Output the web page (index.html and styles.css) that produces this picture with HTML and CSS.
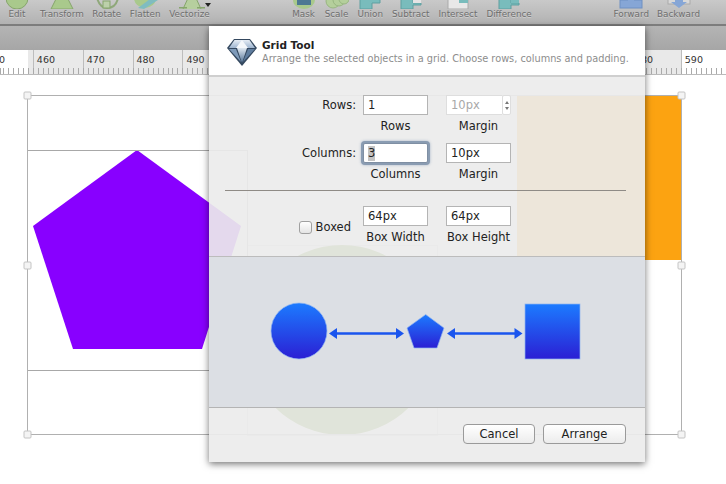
FILE: index.html
```html
<!DOCTYPE html>
<html lang="en">

<head>
    <meta charset="UTF-8">
    <title>Grid Tool</title>
    <link rel="stylesheet" href="styles.css">
</head>

<body>
    <div class="app">
        <!-- toolbar, the icons are cut off by the top of the window -->
        <div class="toolbar">
            <div class="group group-left">
                <div class="tool tool-edit"><svg width="30" height="9"><ellipse cx="15" cy="-2" rx="11" ry="11" fill="#a9c98c" stroke="#86a56c" /></svg><span>Edit</span></div>
                <div class="tool tool-transform"><svg width="30" height="9"><polygon points="10,-3 20,-3 26,9 4,9" fill="#a9c98c" stroke="#86a56c" /></svg><span>Transform</span></div>
                <div class="tool tool-rotate"><svg width="30" height="9"><path d="M5 -2 Q8 8 15 8 Q24 8 26 -2" fill="none" stroke="#8fa87a" stroke-width="2" /><rect x="11" y="1" width="7" height="7" fill="#bcd0aa" stroke="#86a56c" /></svg><span>Rotate</span></div>
                <div class="tool tool-flatten"><svg width="30" height="9"><ellipse cx="15" cy="-2" rx="11" ry="10" fill="#a9c98c" /><path d="M8 8 L24 -4 L28 0 L14 9 Z" fill="#7fbcc0" /></svg><span>Flatten</span></div>
                <div class="tool tool-vector"><svg width="42" height="9"><path d="M14 9 L20 -4 L26 -4 L32 9" fill="#b6cf9e" stroke="#86a56c" /><rect x="10" y="7" width="8" height="1.5" fill="#86a56c" /><rect x="28" y="7" width="8" height="1.5" fill="#86a56c" /><polygon points="36,3 42,3 39,7" fill="#222" /></svg><span>Vectorize</span></div>
            </div>
            <div class="group group-mid">
                <div class="tool"><svg width="24" height="9"><ellipse cx="12" cy="0" rx="11" ry="9" fill="#a9c98c" /><rect x="5" y="-4" width="14" height="9" fill="#4d7893" /></svg><span>Mask</span></div>
                <div class="tool"><svg width="24" height="9"><circle cx="8" cy="1" r="7" fill="#b4cf9b" stroke="#98b681" /><circle cx="14" cy="0" r="6" fill="#b4cf9b" stroke="#98b681" /><circle cx="19" cy="-1" r="5" fill="#b4cf9b" stroke="#98b681" /></svg><span>Scale</span></div>
                <div class="tool"><svg width="24" height="9"><path d="M2 -2 H22 V3 H14 V9 H2 Z" fill="#79bcbc" stroke="#5f9fa0" /></svg><span>Union</span></div>
                <div class="tool"><svg width="24" height="9"><path d="M2 -2 H14 V3 H22 V5 H14 V9 H2 Z" fill="#79bcbc" stroke="#5f9fa0" /><rect x="14" y="-2" width="8" height="5" fill="#e4e4e4" /></svg><span>Subtract</span></div>
                <div class="tool"><svg width="24" height="9"><rect x="2" y="-2" width="20" height="11" fill="#e8e8e8" stroke="#aaa" /><rect x="13" y="-2" width="9" height="5" fill="#79bcbc" /></svg><span>Intersect</span></div>
                <div class="tool"><svg width="24" height="9"><path d="M2 -2 H14 V3 H22 V5 H14 V9 H2 Z" fill="#79bcbc" stroke="#5f9fa0" /><rect x="14" y="-2" width="8" height="5" fill="#79bcbc" /></svg><span>Difference</span></div>
            </div>
            <div class="group group-right">
                <div class="tool"><svg width="24" height="9"><rect x="1" y="0" width="22" height="8" fill="#86a6d6" stroke="#6f90c2" /><rect x="9" y="-2" width="6" height="3" fill="#86a6d6" /></svg><span>Forward</span></div>
                <div class="tool"><svg width="24" height="9"><rect x="1" y="-3" width="22" height="7" fill="#d8d8d8" stroke="#aaa" /><polygon points="8,-2 16,-2 16,2 20,2 12,8 4,2 8,2" fill="#86a6d6" /></svg><span>Backward</span></div>
            </div>
        </div>

        <div class="strip"></div>

        <div class="ruler">
            <span>450</span><span>460</span><span>470</span><span>480</span><span>490</span>
            <!-- 500 to 570 are under the dialog -->
            <span></span><span></span><span></span><span></span><span></span><span></span><span></span><span></span>
            <span>580</span><span>590</span>
        </div>

        <!-- free canvas, numbers are page coordinates -->
        <svg class="canvas" viewBox="0 75 726 409">
            <rect x="247.500" y="245.500" width="190" height="190" fill="none" stroke="#d8d8d8" />
            <circle cx="342" cy="340" r="95" fill="#5f8a10" />
            <rect x="517" y="95" width="164" height="165" fill="#fca311" />
            <polygon points="137,150 241,226 202,349 73,349 33,226" fill="#8800ff" />
            <rect x="27.500" y="150.500" width="220" height="220" fill="none" stroke="#a8a8a8" />
            <rect x="27.500" y="95.500" width="654" height="339" fill="none" stroke="#b0b0b0" />
            <rect class="handle" x="24" y="92" width="7" height="7" rx="1" />
            <rect class="handle" x="24" y="262" width="7" height="7" rx="1" />
            <rect class="handle" x="24" y="431" width="7" height="7" rx="1" />
            <rect class="handle" x="678" y="92" width="7" height="7" rx="1" />
            <rect class="handle" x="678" y="262" width="7" height="7" rx="1" />
            <rect class="handle" x="678" y="431" width="7" height="7" rx="1" />
        </svg>

        <div class="dialog">
            <div class="dlg-head">
                <svg class="gem" width="30" height="28" viewBox="0 0 30 28">
                    <defs>
                        <linearGradient id="gemTop" x1="0" y1="0" x2="0" y2="1">
                            <stop offset="0" stop-color="#e6edf5" />
                            <stop offset="1" stop-color="#9db4cf" />
                        </linearGradient>
                        <linearGradient id="gemLow" x1="0" y1="0" x2="0" y2="1">
                            <stop offset="0" stop-color="#dfe8f1" />
                            <stop offset="1" stop-color="#4f6f93" />
                        </linearGradient>
                    </defs>
                    <polygon points="7,1 23,1 30,10 15,28 0,10" fill="#34485f" />
                    <polygon points="7.500,2 22.500,2 28,10 2,10" fill="url(#gemTop)" />
                    <polygon points="10,10 20,10 15,25" fill="url(#gemLow)" />
                    <polygon points="2,11 9,11 14,24" fill="#7f9bba" />
                    <polygon points="28,11 21,11 16,24" fill="#5f7d9e" />
                    <polygon points="15,2 21,10 9,10" fill="#f5f8fb" />
                </svg>
                <div>
                    <div class="dlg-title">Grid Tool</div>
                    <div class="dlg-sub">Arrange the selected objects in a grid. Choose rows, columns and padding.</div>
                </div>
            </div>

            <div class="dlg-form">
                <div class="row">
                    <label class="row-label">Rows:</label>
                    <div class="field">
                        <div class="input">1</div>
                        <div class="caption">Rows</div>
                    </div>
                    <div class="field">
                        <div class="stepper-wrap">
                            <div class="input input-off">10px</div>
                            <div class="stepper"><i class="up"></i><i class="down"></i></div>
                        </div>
                        <div class="caption">Margin</div>
                    </div>
                </div>
                <div class="row">
                    <label class="row-label">Columns:</label>
                    <div class="field">
                        <div class="input input-focus"><span class="sel">3</span></div>
                        <div class="caption">Columns</div>
                    </div>
                    <div class="field">
                        <div class="input">10px</div>
                        <div class="caption">Margin</div>
                    </div>
                </div>
                <div class="sep"></div>
                <div class="row">
                    <label class="row-label row-check"><span class="check"></span>Boxed</label>
                    <div class="field">
                        <div class="input">64px</div>
                        <div class="caption">Box Width</div>
                    </div>
                    <div class="field">
                        <div class="input">64px</div>
                        <div class="caption">Box Height</div>
                    </div>
                </div>
            </div>

            <div class="dlg-preview">
                <svg width="330" height="80" viewBox="260 290 330 80">
                    <defs>
                        <linearGradient id="blue" x1="0" y1="0" x2="0" y2="1">
                            <stop offset="0" stop-color="#1c7bff" />
                            <stop offset="1" stop-color="#2b1fd4" />
                        </linearGradient>
                    </defs>
                    <circle cx="299" cy="331" r="28" fill="url(#blue)" stroke="#8fb4f0" stroke-width="0.700" />
                    <polygon points="425.700,314.500 444,328 437,348 414,348 407,328" fill="url(#blue)" stroke="#8fb4f0" stroke-width="0.700" />
                    <rect x="525" y="304" width="55" height="55" fill="url(#blue)" stroke="#8fb4f0" stroke-width="0.700" />
                    <path d="M334 333.500 H400" stroke="#1a55ee" stroke-width="2.500" />
                    <polygon points="329,333.500 337,328 337,339" fill="#1a55ee" />
                    <polygon points="404,333.500 396,328 396,339" fill="#1a55ee" />
                    <path d="M452 333.500 H518" stroke="#1a55ee" stroke-width="2.500" />
                    <polygon points="447,333.500 455,328 455,339" fill="#1a55ee" />
                    <polygon points="522.500,333.500 514.500,328 514.500,339" fill="#1a55ee" />
                </svg>
            </div>

            <div class="dlg-foot">
                <button class="btn btn-cancel">Cancel</button>
                <button class="btn btn-ok">Arrange</button>
            </div>
        </div>
    </div>
</body>

</html>
```

FILE: styles.css
```css
* {
    padding: 0;
    margin: 0;
    box-sizing: border-box;
}

body {
    overflow: hidden;
    background: #fff;
    font-family: "DejaVu Sans", sans-serif;
    color: #222;
}

.app {
    width: 726px;
    height: 484px;
    position: relative;
    display: flex;
    flex-direction: column;
    overflow: hidden;
}

/* toolbar */
.toolbar {
    height: 26px;
    display: flex;
    background: linear-gradient(#c9c9c9, #b2b2b2);
    border-bottom: 2px solid #7d7d7d;
}

.group {
    display: flex;
    align-items: flex-start;
}

.group-left {
    gap: 8px;
    padding-left: 2px;
}

.group-mid {
    gap: 9px;
    margin-left: 81px;
}

.group-right {
    gap: 8px;
    margin-left: auto;
    margin-right: 26px;
}

.tool {
    display: flex;
    flex-direction: column;
    align-items: center;
    font-size: 8.800px;
    line-height: 11px;
    color: #6e6e6e;
    text-shadow: 0 1px 0 rgba(255, 255, 255, 0.35);
}

.tool svg {
    display: block;
    overflow: hidden;
}

.strip {
    height: 24px;
    background: linear-gradient(#b4b4b4, #a6a6a6);
}

/* ruler */
.ruler {
    height: 25px;
    display: flex;
    padding-left: 28px;
    background-color: #fff;
    border-bottom: 1px solid #bbb;
    overflow: hidden;
    position: relative;
}

.ruler::before {
    content: "";
    position: absolute;
    left: 28px;
    top: 0;
    width: 653px;
    height: 24px;
    background: #e9e9e9;
}

.ruler::after {
    content: "";
    position: absolute;
    left: 0;
    right: 0;
    bottom: 0;
    height: 6px;
    background: repeating-linear-gradient(90deg, #aaa 0, #aaa 1px, transparent 1px, transparent 4.985px);
    background-position: 3px 0;
}

.ruler span {
    flex: none;
    width: 49.850px;
    position: relative;
    padding: 3px 0 0 3px;
    border-left: 1px solid #bdbdbd;
    font-size: 9.500px;
    line-height: 14px;
    color: #333;
}

.ruler span:first-child {
    margin-left: -45px;
}

/* canvas */
.canvas {
    display: block;
    width: 726px;
    height: 409px;
}

.handle {
    fill: #f4f4f4;
    stroke: #c4c4c4;
}

/* dialog */
.dialog {
    position: absolute;
    z-index: 5;
    left: 209px;
    top: 26px;
    width: 436px;
    height: 436px;
    display: flex;
    flex-direction: column;
    box-shadow: 0 2px 7px rgba(0, 0, 0, 0.55);
}

.dlg-head {
    height: 51px;
    flex: none;
    display: flex;
    align-items: flex-start;
    padding: 12px 0 0 18px;
    gap: 5px;
    background: #fff;
    border-bottom: 2px solid #cfcfcf;
}

.gem {
    flex: none;
}

.dlg-title {
    font-size: 10.500px;
    font-weight: bold;
    line-height: 14px;
    color: #222;
}

.dlg-sub {
    font-size: 9.770px;
    line-height: 13px;
    color: #8d8d8d;
    white-space: nowrap;
}

.dlg-form {
    height: 179px;
    flex: none;
    padding-top: 18px;
    display: flex;
    flex-direction: column;
    background: rgba(236, 236, 236, 0.92);
}

.row {
    display: grid;
    grid-template-columns: 147px 65px 65px;
    column-gap: 7px;
    margin-bottom: 5px;
}

.row:first-child {
    margin-bottom: 6px;
}

.row > .field:last-child {
    margin-left: 11px;
}

.row-label {
    font-size: 11.500px;
    line-height: 20px;
    text-align: right;
}

.row-check {
    display: flex;
    justify-content: flex-end;
    align-items: center;
    gap: 4px;
    padding-right: 5px;
}

.check {
    width: 13px;
    height: 13px;
    border: 1px solid #a0a0a0;
    border-radius: 3px;
    background: linear-gradient(#fff, #e4e4e4);
}

.field {
    display: flex;
    flex-direction: column;
    align-items: center;
    width: 65px;
}

.input {
    width: 65px;
    height: 20px;
    padding-left: 4px;
    background: #fff;
    border: 1px solid #b4b4b4;
    font-size: 11.500px;
    line-height: 19px;
    color: #222;
}

.input-off {
    width: 56px;
    border: 1px solid #dedede;
    border-right: 0;
    color: #a8a8a8;
}

.input-focus {
    border-color: #7f8fa3;
    box-shadow: 0 0 0 2px #8a9cb2, 0 0 3px 2px #a7b6c8;
    border-radius: 2px;
}

.sel {
    display: inline-block;
    background: #c4c4c4;
    line-height: 15px;
}

.stepper-wrap {
    display: flex;
}

.stepper {
    width: 9px;
    height: 20px;
    background: #fff;
    border: 1px solid #dedede;
    border-radius: 2px;
    display: flex;
    flex-direction: column;
    align-items: center;
    justify-content: center;
    gap: 3px;
}

.stepper i {
    width: 0;
    height: 0;
    border-left: 2px solid transparent;
    border-right: 2px solid transparent;
}

.stepper .up {
    border-bottom: 3px solid #777;
}

.stepper .down {
    border-top: 3px solid #777;
}

.caption {
    font-size: 11.500px;
    line-height: 22px;
    white-space: nowrap;
}

.sep {
    height: 1px;
    margin: 0 19px 15px 16px;
    background: #8f8b86;
}

.dlg-preview {
    height: 152px;
    flex: none;
    display: flex;
    align-items: center;
    justify-content: center;
    background: #dcdfe4;
    border-top: 1px solid #bcbcbc;
    border-bottom: 1px solid #b4b4b4;
}

.dlg-preview svg {
    margin: 0 0 4px -4px;
}

.dlg-foot {
    flex: 1;
    display: flex;
    justify-content: flex-end;
    align-items: flex-start;
    gap: 8px;
    padding: 16px 19px 0 0;
    background: rgba(236, 236, 236, 0.92);
}

.btn {
    height: 20px;
    border: 1px solid #9a9a9a;
    border-radius: 4px;
    background: linear-gradient(#fff, #ececec);
    font-family: inherit;
    font-size: 11.500px;
    color: #222;
}

.btn-cancel {
    width: 72px;
}

.btn-ok {
    width: 83px;
}
```
